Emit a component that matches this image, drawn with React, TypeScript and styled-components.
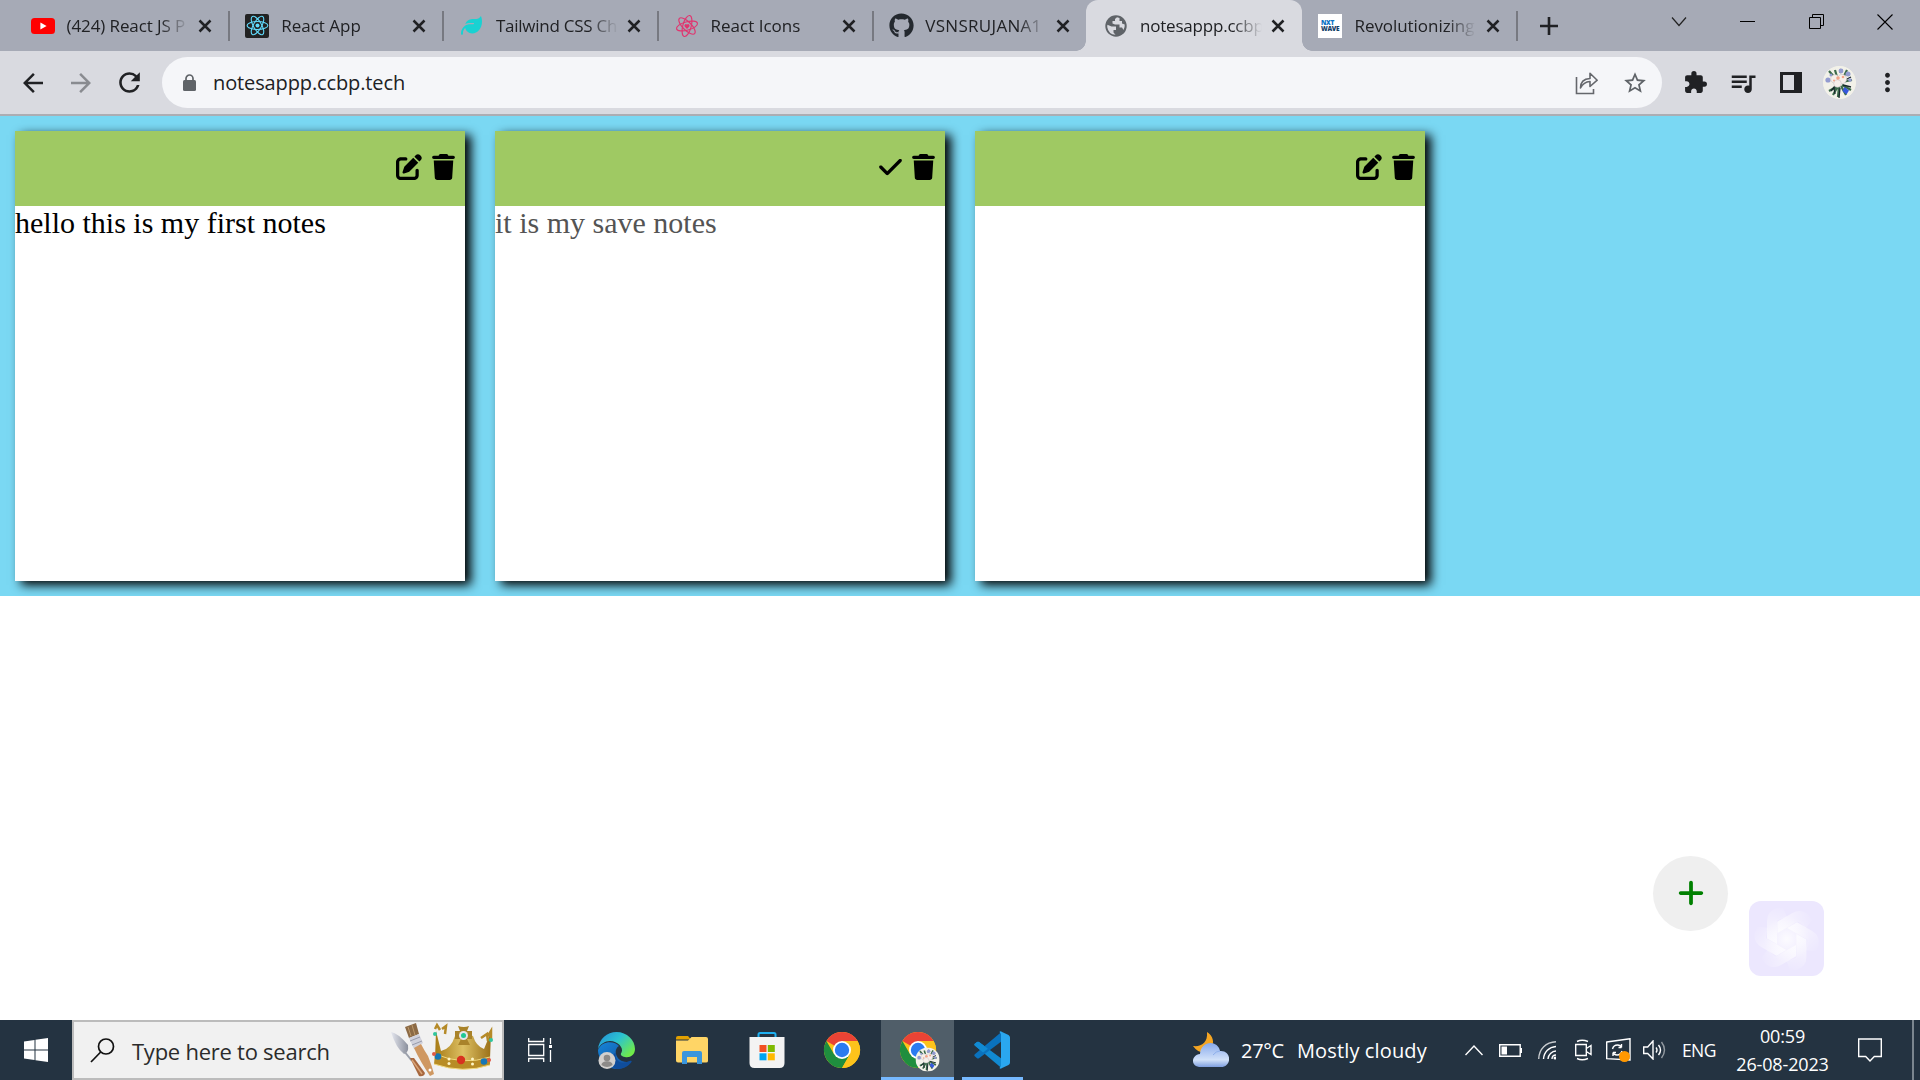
import React from 'react';
import styled, { createGlobalStyle, css } from 'styled-components';
import { FaPenToSquare, FaTrash, FaCheck, FaPlus, FaLeaf, FaGithub } from 'react-icons/fa6';
import { MdStarBorder, MdExtension, MdQueueMusic, MdMoreVert, MdArrowBack, MdArrowForward, MdRefresh } from 'react-icons/md';

const Global = createGlobalStyle`
  * { box-sizing: border-box; }
  body { margin: 0; background: #fff; overflow: hidden; }
  svg { display: block; flex: none; }
`;
const ui = css`font-family: "Open Sans", "Noto Sans", sans-serif; white-space: nowrap;`;

const Screen = styled.div`width: 1920px; height: 1080px; display: flex; flex-direction: column; overflow: hidden;`;

/* ---------- browser chrome ---------- */
const TabStrip = styled.div`
  ${ui} height: 51px; flex: none; background: #a6aab6; display: flex; padding-left: 14px;
`;
const TabBox = styled.div<{ $active?: boolean; $sep?: boolean }>`
  width: 214.7px; height: 51px; padding: 0 11px 0 16.5px; display: flex; align-items: center; position: relative; flex: none;
  color: #202124;
  ${p => p.$active && css`
    width: 216px; margin-left: -1.5px; padding-left: 18px;
    background: #d9dae0; border-radius: 12px 12px 0 0;
    &::before, &::after { content: ''; position: absolute; bottom: 0; width: 10px; height: 10px; }
    &::before { left: -10px; background: radial-gradient(circle at 0 0, transparent 9.5px, #d9dae0 10px); }
    &::after { right: -10px; background: radial-gradient(circle at 100% 0, transparent 9.5px, #d9dae0 10px); }
  `}
  ${p => p.$sep && css`
    &::after { content: ''; position: absolute; right: -1px; top: 11px; width: 2px; height: 30px; background: #777981; }
  `}
`;
const Favicon = styled.div`width: 24px; height: 24px; display: flex; align-items: center; justify-content: center; flex: none;`;
const TabTitle = styled.div<{ $ls?: number }>`
  width: 122px; flex: none; margin-left: 12px; font-size: 17px; line-height: 24px; overflow: hidden; letter-spacing: ${p => p.$ls ?? 0}px;
  mask-image: linear-gradient(90deg, #000 76%, transparent 100%);
`;
const TabClose = styled.div`margin-left: auto; width: 26px; display: flex; justify-content: center;`;
const NewTab = styled.div`width: 64px; display: flex; align-items: center; justify-content: center;`;
const WindowButtons = styled.div`margin-left: auto; display: flex; height: 43px; padding-right: 0.5px;`;
const WindowButton = styled.div`width: 68.7px; display: flex; align-items: center; justify-content: center;`;

const Toolbar = styled.div`
  ${ui} height: 65px; flex: none; background: #d9dae0; border-bottom: 2px solid #acadb3; display: flex; align-items: center;
  padding: 0 9px; color: #202124;
`;
const ToolButton = styled.div<{ $muted?: boolean }>`
  width: 48px; height: 48px; display: flex; align-items: center; justify-content: center; color: ${p => p.$muted ? '#898b90' : '#202124'};
`;
const AddressBar = styled.div`
  width: 1500px; height: 51px; margin: 0 9px; border-radius: 26px; background: #f5f6f9; display: flex; align-items: center;
  padding: 0 3px 0 20.5px; color: #5f6368;
`;
const Url = styled.div`font-size: 20px; line-height: 28px; margin: 0 0 0 17.5px; color: #202124; flex: 1; letter-spacing: -0.12px;`;
const Avatar = styled.div`width: 33px; height: 33px; border-radius: 50%; overflow: hidden; background: #f1f0e8;`;

/* ---------- notes page ---------- */
const Page = styled.main`height: 904px; flex: none; background: #fff; display: flex; flex-direction: column;`;
const Board = styled.section`height: 480px; flex: none; background: #7ad8f3; padding: 15px; display: flex; gap: 30px; overflow: hidden;`;
const Card = styled.article`width: 450px; height: 450px; background: #fff; box-shadow: 6px 4px 10px #000; display: flex; flex-direction: column;`;
const CardHeader = styled.header`
  height: 75px; flex: none; background: #9fc963; display: flex; align-items: center; justify-content: flex-end; gap: 10px; padding: 0 10px 3px 0;
  color: #000;
`;
const NoteAction = styled.span<{ $w: number }>`
  display: flex; svg { width: ${p => p.$w}px; height: 26px; }
`;
const NoteText = styled.p<{ $muted?: boolean }>`
  margin: 0; font-family: "Liberation Serif", serif; font-size: 30px; line-height: 33px; color: ${p => p.$muted ? '#545454' : '#000'};
`;
const Floating = styled.div`flex: 1; display: flex; align-items: flex-end; justify-content: flex-end; padding: 0 96px 44px 0; gap: 21px;`;
const AddButton = styled.button`
  width: 75px; height: 75px; border: 0; border-radius: 50%; background: #efefef; color: green; padding: 0; margin-bottom: 45.5px;
  display: flex; align-items: center; justify-content: center;
`;

/* ---------- taskbar ---------- */
const Taskbar = styled.footer`${ui} height: 60px; flex: none; background: #243341; display: flex; color: #fff;`;
const Start = styled.div`width: 72px; display: flex; align-items: center; justify-content: center;`;
const SearchBox = styled.div`
  width: 432px; background: #f1f1f1; border: 2px solid #bcbcbc; display: flex; align-items: center; padding-left: 15.5px; color: #2b2b2b; overflow: hidden;
`;
const SearchLabel = styled.span`font-size: 22px; margin-left: 17.5px; width: 258px; line-height: 30px; letter-spacing: -0.25px; padding-top: 2px;`;
const TaskItem = styled.div<{ $w: number; $active?: boolean; $line?: number }>`
  width: ${p => p.$w}px; display: flex; align-items: center; justify-content: center; position: relative;
  background: ${p => p.$active ? '#505e69' : 'transparent'};
  ${p => p.$line && css`&::after { content: ''; position: absolute; bottom: 0; left: calc(50% - ${p.$line / 2}px); width: ${p.$line}px; height: 3px; background: #76b9ff; }`}
`;
const Weather = styled.div`margin-left: 162px; display: flex; align-items: center; width: 272px; font-size: 20px; line-height: 28px;`;
const Temp = styled.span`margin-left: 12px; width: 56px; letter-spacing: -0.3px; padding-top: 2px;`;
const Sky = styled.span`letter-spacing: 0.13px; padding-top: 2px;`;
const Tray = styled.div`display: flex; align-items: center;`;
const TrayIcon = styled.div<{ $w: number }>`width: ${p => p.$w}px; display: flex; justify-content: center;`;
const Lang = styled.span`font-size: 17.5px; width: 34px; margin-left: 2px; letter-spacing: -0.6px;`;
const Clock = styled.div`
  width: 110px; margin-left: 11.5px; margin-right: 0.5px; text-align: center; font-size: 18px; line-height: 28px; display: flex; flex-direction: column;
  letter-spacing: -0.15px;
`;
const Desktop = styled.div`width: 8px; margin-left: auto; border-left: 2px solid #7b868f;`;

const CloseX = () => <svg width="14" height="14" viewBox="0 0 14 14"><path d="M1.500 1.500l11 11M12.500 1.500l-11 11" stroke="#202124" strokeWidth="2.500" /></svg>;

const Atom = ({ color, size, tilt = 0, heart }: { color: string; size: number; tilt?: number; heart?: boolean }) => (
  <svg width={size} height={size} viewBox="-12 -12 24 24"><g transform={`rotate(${tilt})`} fill="none" stroke={color} strokeWidth="1.150">
    {[0, 60, 120].map(a => <ellipse key={a} rx="10.800" ry="4.200" transform={`rotate(${a})`} />)}</g>
    {heart ? <path d="M0 3L-2.400.4C-3-.8-2-2-1-2Q-.3-2 0-1.200 .3-2 1-2C2-2 3-.8 2.400.4z" fill={color} /> : <circle r="2.100" fill={color} />}
  </svg>
);
const YouTube = () => <svg width="24" height="16" viewBox="0 0 24 16"><rect width="24" height="16" rx="3.500" fill="#f00" /><path d="M9.400 4.500v7l6.200-3.500z" fill="#fff" /></svg>;
const Globe = () => (
  <svg width="24" height="24" viewBox="0 0 24 24">
    <circle cx="12" cy="12" r="10.700" fill="#5f6368" />
    <path d="M13 3.300l-2 1.700v2H8.500v2.500L11 10.500h4.500v3h2.500l1.500 2.500q1.500-2.500 1.200-5.500L18 9.500V7h-2.500V4z" fill="#d9dae0" />
    <path d="M3.400 10.800l4.100 1.700h4.500v3.500H9.500v2.500l2 2.300Q4.500 20.500 3.200 13z" fill="#d9dae0" />
  </svg>
);
const Lock = () => (
  <svg width="13" height="17" viewBox="0 0 13 17"><rect y="6" width="13" height="11" rx="1.500" fill="#5f6368" /><path d="M3 7V4.500a3.500 3.500 0 0 1 7 0V7" fill="none" stroke="#5f6368" strokeWidth="1.700" /></svg>
);
const ReactTile = styled.div`width: 24px; height: 24px; border-radius: 2px; background: #222; display: flex; align-items: center; justify-content: center;`;
const NxtTile = styled.div`
  width: 24px; height: 24px; background: #fff; font: 900 6.5px/6px "Open Sans", sans-serif; letter-spacing: -0.3px; color: #134068; padding: 6px 0 0 2.5px;
  b { display: block; color: #0b72c4; font-weight: 900; }
`;

const Bouquet = ({ size }: { size: number }) => (
  <svg width={size} height={size} viewBox="0 0 33 33">
    <circle cx="16.500" cy="16.500" r="16.500" fill="#f2f1e9" />
    <g stroke="#3b6a4a" strokeWidth="2.200"><path d="M15 20L6 25M15 20l-5 9M16 20l-1 11M18 20l5 9M19 19l9 5M19 16l10-2M13 13L6 5M14 11l-2-7M20 12l4-8" /></g>
    <g stroke="#182a2c" strokeWidth="1.300"><path d="M12 20l-4 5M17 22l-1 10M20 19l8 2M22 14l6-3M17 7l1-4M11 22l1 6" /></g>
    <g fill="#939bd0"><circle cx="5" cy="14" r="2.600" /><circle cx="18" cy="5" r="2.400" /><circle cx="25" cy="8" r="2.500" /><circle cx="27" cy="14" r="1.800" /><circle cx="8" cy="9" r="1.500" /></g>
    <g fill="#f6efea" stroke="#c9c3c8" strokeWidth=".6"><circle cx="12" cy="13" r="4.300" /><circle cx="19" cy="13" r="4.600" /><circle cx="14.500" cy="17.500" r="3.800" /></g>
    <g fill="#f3a489"><circle cx="15" cy="12" r="1.800" /><circle cx="20" cy="11" r="1.300" /><circle cx="11" cy="14.500" r="1" /></g>
    <path d="M21.500 21l4.500 3.500-2.500 4-4-3.500z" fill="#3557dc" />
  </svg>
);

const ShareIcon = () => (
  <svg width="24" height="24" viewBox="0 0 24 24" fill="none" stroke="#65676c" strokeWidth="1.600">
    <path d="M1.500 6v16.500h17V18" /><path d="M5.500 17c0-6 3.500-9.200 9.500-9.500V2.200l7.200 7-7.200 6.300v-5c-4.500.2-7.500 2.500-9.500 6.500z" strokeLinejoin="round" />
  </svg>
);

const ChromeIcon = ({ badge }: { badge?: boolean }) => (
  <svg width="36" height="36" viewBox="0 0 36 36" overflow="visible">
    <circle cx="18" cy="18" r="18" fill="#fdc31b" />
    <path d="M18 18L2.400 9A18 18 0 0 1 33.600 9z" fill="#ea4335" />
    <path d="M2.400 9A18 18 0 0 0 18 36L25.800 22.500 18 18 10.200 22.500z" fill="#1f8e3e" />
    <path d="M18 9h15.600A18 18 0 0 1 18 36l7.800-13.500z" fill="#fdc31b" />
    <circle cx="18" cy="18" r="9" fill="#fff" /><circle cx="18" cy="18" r="7.200" fill="#2b7bf0" />
    {badge && <g transform="translate(15.500 15.500) scale(.73)"><Bouquet size={33} /></g>}
  </svg>
);
const EdgeIcon = () => (
  <svg width="37" height="37" viewBox="0 0 37 37">
    <defs>
      <linearGradient id="edgeTop" x1="0" y1="0" x2="1" y2=".7"><stop stopColor="#238bd8" /><stop offset=".5" stopColor="#2bc3d2" /><stop offset="1" stopColor="#70eb49" /></linearGradient>
      <linearGradient id="edgeLow" x1="0" y1="0" x2="1" y2="1"><stop stopColor="#1685d9" /><stop offset="1" stopColor="#124a97" /></linearGradient>
    </defs>
    <path d="M0 18C0 27 8 37 19 37c6 0 11-3 14.500-8-7 2.500-14-.5-15.500-7-1-4 1-7 3-8-4-5-17-6-21 4z" fill="url(#edgeLow)" />
    <path d="M18 21c-2 6 4 12 11 9 3-1 5-2 4.500 0-3 4.500-9 7-14.500 7-8-2-9-14-1-16z" fill="#0f4d9c" />
    <path d="M0 17C1 7 9 0 18.500 0 29 0 37 8 37 17c0 6-5 9-10 8-4-.8-5-2.500-3.500-4.500C26 16 20 9 12 9 7 9 2 12 0 17z" fill="url(#edgeTop)" />
    <circle cx="9" cy="28.500" r="8.500" fill="#d2d0ce" /><circle cx="9" cy="26" r="3.300" fill="#8c8a88" /><path d="M3.500 33c0-5 11-5 11 0q-5.500 4-11 0z" fill="#8c8a88" />
  </svg>
);
const FolderIcon = () => (
  <svg width="32" height="28" viewBox="0 0 32 28">
    <path d="M0 2Q0 0 2 0h10l3 3.500H0z" fill="#e2a000" /><path d="M0 4.500h12L15.500 1H30q2 0 2 2v22q0 1.500-2 1.500H2q-2 0-2-2z" fill="#ffd566" />
    <path d="M6 28V17q0-2 2-2h16q2 0 2 2v11h-5v-7H11v7z" fill="#3a96dd" />
  </svg>
);
const StoreIcon = () => (
  <svg width="36" height="36" viewBox="0 0 36 36">
    <path d="M9.500 7V2.500Q9.500 1 11 1h14q1.500 0 1.500 1.500V7" fill="none" stroke="#1fb0f0" strokeWidth="2" />
    <path d="M.5 5h35v26q0 5-5 5h-25q-5 0-5-5z" fill="#f3f3f3" />
    <path d="M10.500 13h7v7h-7z" fill="#f25022" /><path d="M18.800 13h7v7h-7z" fill="#7fba00" /><path d="M10.500 21.300h7v7h-7z" fill="#00a4ef" /><path d="M18.800 21.300h7v7h-7z" fill="#ffb900" />
  </svg>
);
const CodeIcon = () => (
  <svg width="36" height="38" viewBox="0 0 36 38">
    <path d="M.5 13L3 11q1-.6 2 0L28 28v9.500L.8 14.500q-.8-.7-.3-1.500z" fill="#118ad2" />
    <path d="M.5 25L3 27.300q1 .6 2 0L28 10V.5L.8 23.200q-.8.8-.3 1.800z" fill="#0a72bd" />
    <path d="M.5 13L3 11q1-.6 2 0L14 17.700l-5 3.800L.8 14.500q-.8-.7-.3-1.500z" fill="#118ad2" />
    <path d="M27 .4L34.500 4Q36 5 36 6.500v25q0 1.500-1.500 2.500L27 37.600q-1 .4-1.500-.6L27 35V3l-1.500-2q.5-1 1.500-.6z" fill="#2aa7f0" />
  </svg>
);
const TaskViewIcon = () => (
  <svg width="24" height="24" viewBox="0 0 24 24" fill="none" stroke="#fff" strokeWidth="1.300">
    <path d="M.7 0v3.500h15V0M.7 24v-3.500h15V24M.7 6.500h15v11h-15zM22.500 0v6M22.500 12v12" /><path d="M21 7h3v3h-3z" fill="#fff" stroke="none" />
  </svg>
);
const RoyalTools = () => (
  <svg width="104" height="56" viewBox="0 0 104 56">
    <defs>
      <linearGradient id="gold"><stop stopColor="#a77b16" /><stop offset=".5" stopColor="#ddc063" /><stop offset="1" stopColor="#9a7018" /></linearGradient>
      <linearGradient id="steel"><stop stopColor="#e5e7ef" /><stop offset="1" stopColor="#8a8f9c" /></linearGradient>
    </defs>
    <path d="M1 10Q8 11 18 23q1 8-4 9-8-6-13-22z" fill="url(#steel)" /><path d="M14 29l8 10" stroke="#9ba0ab" strokeWidth="2" />
    <path d="M20 36l4 0L35 51q-1 4-6 3z" fill="#a8683f" /><path d="M22 38l10 14" stroke="#d9a477" strokeWidth="1.500" />
    <path d="M15 5l11-4 3 11-10 4z" fill="#8c6a45" /><path d="M18 5l3 9M22 3l3 10" stroke="#bd9969" strokeWidth="1" />
    <path d="M19 16l10-4 4 9-9 6z" fill="#d0d1dc" /><path d="M20 19l10-4M22 23l10-4" stroke="#8f93a5" strokeWidth=".9" />
    <path d="M24 26l7-4q3 6 7 12 4 10 6 18l-4 2q-10-15-16-28z" fill="#cf9862" /><circle cx="40" cy="48" r="1.500" fill="#fff" />
    <path d="M46 9l5 20q10-2 14-15l9-3 9 3q3 10 11 13l7-17-1 27q-27 11-55 0z" fill="url(#gold)" />
    <path d="M68 4q6 2 11 0l-2 5 5 0v8h-5l3 6H68l3-6h-6V9h5z" fill="#a9832a" /><circle cx="73.500" cy="13.500" r="4.500" fill="#e6e4ea" /><circle cx="73.500" cy="13.500" r="2.500" fill="#20c795" />
    <path d="M45 7l2-4 3 5M52 7l4-3-1 8M91 16l6-4 1 7M98 14l3-5v8" fill="none" stroke="#b58a28" strokeWidth="2.500" />
    <path d="M45 32q28 12 55 3v8q-27 9-56-1z" fill="#b88c25" /><path d="M45 32q28 12 55 3M44 42q29 10 56 1" stroke="#f1d87e" strokeWidth="1" fill="none" />
    <circle cx="71" cy="38" r="4.200" fill="#d8321f" /><circle cx="48" cy="34.500" r="3.300" fill="#1676b5" /><circle cx="94" cy="39.500" r="3.300" fill="#1676b5" />
    <g fill="#fff5c5"><circle cx="59" cy="37" r="1.500" /><circle cx="59" cy="41.500" r="1.500" /><circle cx="82.500" cy="37" r="1.500" /><circle cx="82.500" cy="42" r="1.500" /></g>
    <g fill="#30c69d"><circle cx="45" cy="12" r="2" /><circle cx="101" cy="18" r="2" /></g><g fill="#e05845"><circle cx="44" cy="32" r="2" /><circle cx="99" cy="38" r="2" /></g>
  </svg>
);
const WeatherIcon = () => (
  <svg width="36" height="36" viewBox="0 0 36 36">
    <defs><linearGradient id="cloud" x1="0" y1="0" x2="0" y2="1"><stop stopColor="#87a9ec" /><stop offset=".7" stopColor="#d2e2f9" /><stop offset="1" stopColor="#7e9fe0" /></linearGradient></defs>
    <path d="M14 0c6 4 8 10 4 17-5 5-12 5-18-3 8 1 15-3 14-14z" fill="#f5a623" />
    <path d="M8 35c-11 0-10-12-1-13C8 8 25 8 27 19c12-1 12 16 1 16z" fill="url(#cloud)" /><path d="M20 23q3-4 7-4" stroke="#8eb0eb" fill="none" />
  </svg>
);
const Swirl = () => (
  <svg width="75" height="75" viewBox="0 0 75 75">
    <defs>
      <linearGradient id="petal" gradientUnits="userSpaceOnUse" x1="30" y1="6" x2="22" y2="42"><stop stopColor="#fff" stopOpacity=".04" /><stop offset="1" stopColor="#fff" stopOpacity=".7" /></linearGradient>
      <radialGradient id="core"><stop stopColor="#fff" stopOpacity=".85" /><stop offset="1" stopColor="#fff" stopOpacity="0" /></radialGradient>
    </defs>
    <rect width="75" height="75" rx="12" fill="#ece7fe" />
    <circle cx="37.700" cy="38" r="23" fill="url(#core)" />
    {[0, 60, 120, 180, 240, 300].map(a => <path key={a} transform={`rotate(${a} 37.700 38)`} d="M18 37.500V20Q18 10 28 7L34 6.500 38 16Q28 19 28 20V43z" fill="url(#petal)" />)}
  </svg>
);

const line = { fill: 'none', stroke: '#fff', strokeWidth: 1.4 };

const tabs: { title: string; icon: React.ReactNode; active?: boolean; sep?: boolean; ls?: number }[] = [
  { title: '(424) React JS P', icon: <YouTube />, sep: true, ls: -0.1 },
  { title: 'React App', icon: <ReactTile><Atom color="#61dafb" size={23} /></ReactTile>, sep: true },
  { title: 'Tailwind CSS Ch', icon: <FaLeaf size={21} color="#19d2d2" />, sep: true, ls: -0.25 },
  { title: 'React Icons', icon: <Atom color="#e0356f" size={24} tilt={-15} heart />, sep: true },
  { title: 'VSNSRUJANA1', icon: <FaGithub size={25} color="#24292f" />, ls: 0.3 },
  { title: 'notesappp.ccbp', icon: <Globe />, active: true, ls: -0.2 },
  { title: 'Revolutionizing', icon: <NxtTile><b>NXT</b>WAVE</NxtTile>, sep: true, ls: -0.05 },
];
const notes = [
  { text: 'hello this is my first notes', editing: false },
  { text: 'it is my save notes', editing: true },
  { text: '', editing: false },
];

export default function App() {
  return (
    <Screen>
      <Global />
      <TabStrip>
        {tabs.map(t => (
          <TabBox key={t.title} $active={t.active} $sep={t.sep}>
            <Favicon>{t.icon}</Favicon><TabTitle $ls={t.ls}>{t.title}</TabTitle><TabClose><CloseX /></TabClose>
          </TabBox>
        ))}
        <NewTab><svg width="18" height="18" viewBox="0 0 18 18"><path d="M9 0v18M0 9h18" stroke="#202124" strokeWidth="2.600" /></svg></NewTab>
        <WindowButtons>
          <WindowButton><svg width="16" height="10" viewBox="0 0 16 10"><path d="M1 .5l7 8 7-8" fill="none" stroke="#222" strokeWidth="1.200" /></svg></WindowButton>
          <WindowButton><svg width="15" height="1"><rect width="15" height="1" fill="#000" /></svg></WindowButton>
          <WindowButton><svg width="15" height="15" viewBox="0 0 15 15"><path d="M.5 3.500h11v11H.5zM3.500 3.500v-3h11v11h-3" fill="none" stroke="#000" /></svg></WindowButton>
          <WindowButton><svg width="16" height="16" viewBox="0 0 16 16"><path d="M.5.5l15 15M15.500.5l-15 15" stroke="#000" strokeWidth="1.100" /></svg></WindowButton>
        </WindowButtons>
      </TabStrip>
      <Toolbar>
        <ToolButton><MdArrowBack size={30} /></ToolButton>
        <ToolButton $muted><MdArrowForward size={30} /></ToolButton>
        <ToolButton><MdRefresh size={31} /></ToolButton>
        <AddressBar>
          <Lock /><Url>notesappp.ccbp.tech</Url>
          <ToolButton><ShareIcon /></ToolButton>
          <ToolButton $muted><MdStarBorder size={26} color="#5f6368" /></ToolButton>
        </AddressBar>
        <ToolButton><MdExtension size={25} /></ToolButton>
        <ToolButton><MdQueueMusic size={30} /></ToolButton>
        <ToolButton><svg width="22" height="21" viewBox="0 0 22 21"><path d="M0 0h22v21H0zM3 3v15h11V3z" fill="#202124" fillRule="evenodd" /></svg></ToolButton>
        <ToolButton><Avatar><Bouquet size={33} /></Avatar></ToolButton>
        <ToolButton><MdMoreVert size={29} /></ToolButton>
      </Toolbar>
      <Page>
        <Board>
          {notes.map((n, i) => (
            <Card key={i}>
              <CardHeader>
                {n.editing ? <NoteAction $w={23}><FaCheck /></NoteAction> : <NoteAction $w={26}><FaPenToSquare /></NoteAction>}
                <NoteAction $w={23}><FaTrash /></NoteAction>
              </CardHeader>
              <NoteText $muted={n.editing}>{n.text}</NoteText>
            </Card>
          ))}
        </Board>
        <Floating><AddButton aria-label="+"><FaPlus size={30} /></AddButton><Swirl /></Floating>
      </Page>
      <Taskbar>
        <Start><svg width="24" height="24" viewBox="0 0 24 24" fill="#fff"><path d="M0 3.400L10.500 2v9.500H0zM11.500 1.800L24 0v11.500H11.500zM0 12.500h10.500V22L0 20.600zM11.500 12.500H24V24l-12.500-1.800z" /></svg></Start>
        <SearchBox>
          <svg width="25" height="25" viewBox="0 0 25 25"><circle cx="16" cy="8.500" r="7.500" fill="none" stroke="#111" strokeWidth="1.700" /><path d="M10.700 14L1 24" stroke="#111" strokeWidth="1.700" /></svg>
          <SearchLabel>Type here to search</SearchLabel><RoyalTools />
        </SearchBox>
        <TaskItem $w={72}><TaskViewIcon /></TaskItem>
        <TaskItem $w={81}><EdgeIcon /></TaskItem>
        <TaskItem $w={70}><FolderIcon /></TaskItem>
        <TaskItem $w={79}><StoreIcon /></TaskItem>
        <TaskItem $w={71}><ChromeIcon /></TaskItem>
        <TaskItem $w={4} />
        <TaskItem $w={73} $active $line={73}><ChromeIcon badge /></TaskItem>
        <TaskItem $w={76} $line={61}><CodeIcon /></TaskItem>
        <TaskItem $w={1} />
        <Weather><WeatherIcon /><Temp>27°C</Temp><Sky>Mostly cloudy</Sky></Weather>
        <Tray>
          <TrayIcon $w={18}><svg width="18" height="11" viewBox="0 0 18 11"><path d="M.5 10L9 1l8.500 9" {...line} /></svg></TrayIcon>
          <TrayIcon $w={54}><svg width="23" height="13" viewBox="0 0 23 13"><path d="M.7.7h20.500v11.600H.7zM22.500 4v5" {...line} /><path d="M2.500 2.500h5.500v8H2.500z" fill="#fff" /></svg></TrayIcon>
          <TrayIcon $w={20}><svg width="18" height="19" viewBox="0 0 18 19"><path d="M.7 18C1 8 8 1 18 .7" {...line} opacity=".75" /><path d="M5.500 18C6 11 11 6 18 5.500M10 18c0-4 4-8 8-8M14 18q0-4 4-4" {...line} /><circle cx="17" cy="17" r="1.500" fill="#fff" /></svg></TrayIcon>
          <TrayIcon $w={52}><svg width="17" height="22" viewBox="0 0 17 22"><path d="M2 2.500Q7 0 13 2.500M2 19.500q5 2.500 11 0M.7 5.500h10.600v11H.7zM11.300 9.500L16 6.500v9l-4.700-3" {...line} /></svg></TrayIcon>
          <TrayIcon $w={19}><svg width="25" height="24" viewBox="0 0 25 24"><path d="M.7 4L24 .7V22L.7 20.600z" {...line} /><path d="M6.500 11q1-4 5-4 3 0 4 2.500V6M15.500 9.500h-3M16 13q-1 4-5 4-3 0-4-2.500V18M7 14.500h3" {...line} /><circle cx="18.500" cy="18.500" r="5.500" fill="#ff9800" /></svg></TrayIcon>
          <TrayIcon $w={52}><svg width="23" height="20" viewBox="0 0 23 20"><path d="M.7 7h4L10 1v18l-5.300-5.500h-4zM13 7.500q2 2.500 0 5M15.500 5q4 5 0 10" {...line} /><path d="M18.500 2q6 8 0 16" {...line} opacity=".5" /></svg></TrayIcon>
          <Lang>ENG</Lang>
          <Clock><span>00:59</span><span>26-08-2023</span></Clock>
          <TrayIcon $w={64}><svg width="24" height="24" viewBox="0 0 24 24"><path d="M.7 1h22.600v17.500h-7L12 23l-4.300-4.500h-7z" {...line} /></svg></TrayIcon>
        </Tray>
        <Desktop />
      </Taskbar>
    </Screen>
  );
}
